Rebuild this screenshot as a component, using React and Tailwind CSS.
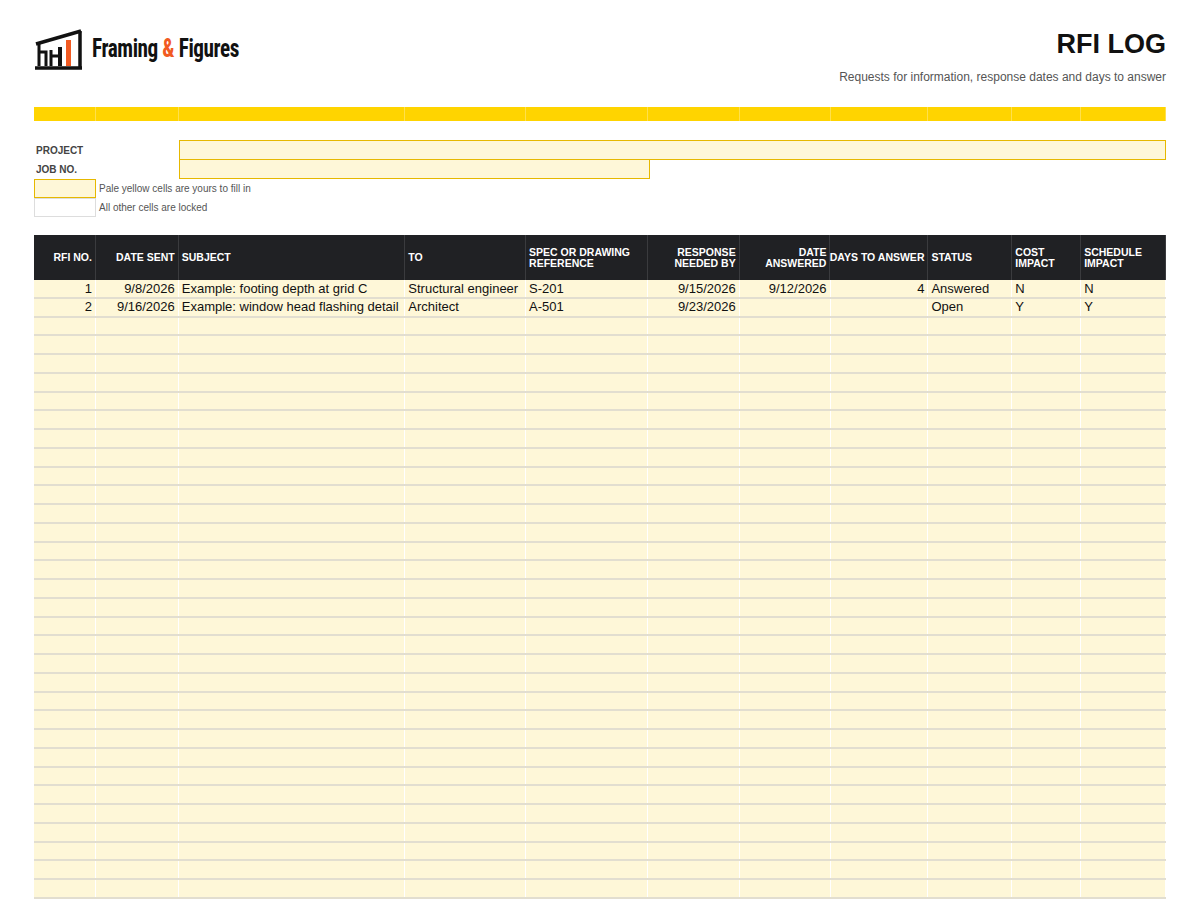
const cols=[62,83,227,121,122,92,91,98,84,69,85];
const heads=[["RFI NO.","r"],["DATE SENT","r"],["SUBJECT","l"],["TO","l"],["SPEC OR DRAWING\nREFERENCE","l"],["RESPONSE\nNEEDED BY","r"],["DATE\nANSWERED","r"],["DAYS TO ANSWER","r"],["STATUS","l"],["COST\nIMPACT","l"],["SCHEDULE\nIMPACT","l"]];
const data=[["1","9/8/2026","Example: footing depth at grid C","Structural engineer","S-201","9/15/2026","9/12/2026","4","Answered","N","N"],["2","9/16/2026","Example: window head flashing detail","Architect","A-501","9/23/2026","","","Open","Y","Y"]];
const rows=[...data,...Array(31).fill(Array(11).fill(""))];
export default function App(){
return(<div className="w-[1200px] h-[900px] bg-white relative overflow-hidden" style={{fontFamily:'"Liberation Sans",Arial,sans-serif'}}>
<div className="flex justify-between px-[34px] pt-[28px] h-[107px]">
<div className="flex items-center gap-[8px] h-[42px]">
<svg width="50" height="42" viewBox="0 0 50 42"><path d="M2 16 L47 3" stroke="#111" strokeWidth="3.5" fill="none"/><path d="M46 3 V40 M1 40 H48" stroke="#111" strokeWidth="3.5"/><path d="M5 16 V38 M5 24 H12 V38 M17 22 V38 M17 28 H24" stroke="#111" strokeWidth="3" fill="none"/><rect x="24" y="19" width="4" height="19" fill="#111"/><rect x="32" y="12" width="5" height="26" fill="#f15a22"/></svg>
<div className="text-[25px] font-bold tracking-[-0.5px] text-[#111]" style={{fontFamily:'"Roboto Condensed","Liberation Sans Narrow",Roboto,sans-serif',transform:'scaleX(0.85)',transformOrigin:'left'}}>Framing <span className="text-[#f15a22]">&amp;</span> Figures</div>
</div>
<div className="text-right">
<div className="text-[27px] font-bold text-[#111] leading-[32px]">RFI LOG</div>
<div className="text-[12px] text-[#555] mt-[8px]">Requests for information, response dates and days to answer</div>
</div>
</div>
<div className="mx-[34px] h-[14px] bg-[#ffd400] flex">{cols.map((w,i)=><div key={i} style={{width:w}} className="border-r border-[#ffe04d] h-full"/>)}</div>
<div className="mx-[34px] mt-[19px] text-[10px] font-bold text-[#444]">
<div className="flex h-[20px] items-center"><div className="w-[145px] pl-[2px]">PROJECT</div><div className="flex-1 h-[20px] bg-[#fef7d8] border border-[#e6b800]"/></div>
<div className="flex h-[19px] items-center"><div className="w-[145px] pl-[2px]">JOB NO.</div><div className="w-[471px] h-[19px] bg-[#fef7d8] border border-[#e6b800] border-t-0"/></div>
</div>
<div className="mx-[34px] text-[10px] text-[#555]">
<div className="flex h-[19px] items-center"><div className="w-[62px] h-[19px] bg-[#fef7d8] border border-[#e6b800]"/><div className="pl-[3px]">Pale yellow cells are yours to fill in</div></div>
<div className="flex h-[19px] items-center"><div className="w-[62px] h-[19px] border border-[#ddd]"/><div className="pl-[3px]">All other cells are locked</div></div>
</div>
<div className="mx-[34px] mt-[18px]">
<div className="flex h-[45px] bg-[#202124] text-white text-[10.5px] font-bold leading-[11px]">
{heads.map(([t,a],i)=><div key={i} style={{width:cols[i]}} className={"flex items-center px-[3px] whitespace-pre border-r border-[#3a3b3e] "+(a==="r"?"justify-end text-right":"")}>{t}</div>)}
</div>
{rows.map((r,ri)=><div key={ri} className="flex h-[18.75px] bg-[#fef7d8] border-b-2 border-[#e2ded0] text-[13px] text-[#111]">
{r.map((c,i)=><div key={i} style={{width:cols[i]}} className={"flex items-center px-[3px] whitespace-nowrap border-r border-white "+(heads[i][1]==="r"?"justify-end":"")}>{c}</div>)}
</div>)}
</div>
</div>);}
